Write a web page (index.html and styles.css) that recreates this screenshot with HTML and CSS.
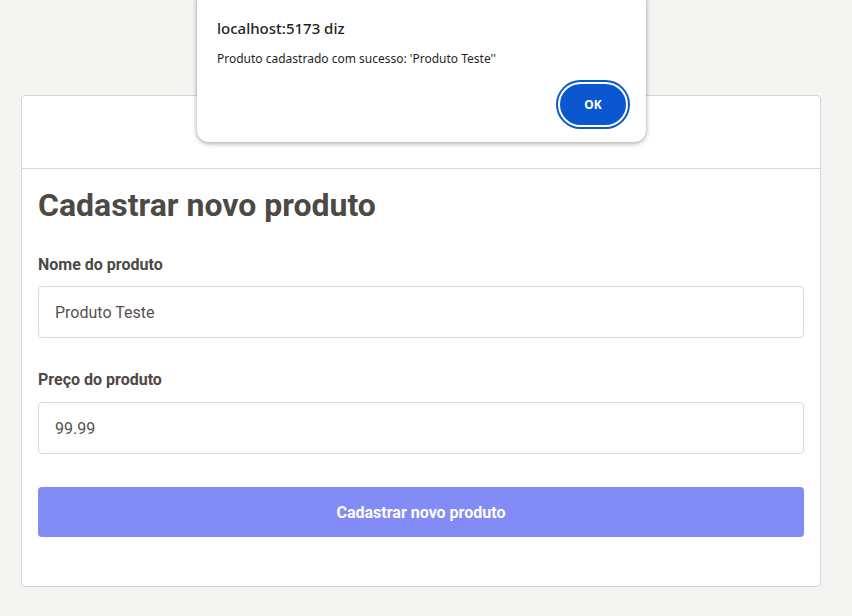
FILE: index.html
```html
<!DOCTYPE html>
<html lang="pt-BR">
<head>
<meta charset="utf-8">
<title>Cadastrar novo produto</title>
<link rel="stylesheet" href="styles.css">
</head>
<body>
<div class="page">
  <div class="card">
    <div class="card-header"></div>
    <form class="card-body">
      <h1 class="title">Cadastrar novo produto</h1>
      <label class="label" for="nome">Nome do produto</label>
      <input class="input" id="nome" type="text" value="Produto Teste">
      <label class="label label-gap" for="preco">Preço do produto</label>
      <input class="input" id="preco" type="text" value="99.99">
      <button class="submit" type="button">Cadastrar novo produto</button>
    </form>
  </div>
</div>
<div class="dialog">
  <div class="dialog-title">localhost:5173 diz</div>
  <div class="dialog-msg">Produto cadastrado com sucesso: 'Produto Teste''</div>
  <div class="dialog-actions">
    <button class="ok" type="button">OK</button>
  </div>
</div>
</body>
</html>
```
FILE: styles.css
```css
html, body {
  margin: 0;
  padding: 0;
  background: #f4f4f2;
  font-family: Roboto, "Liberation Sans", sans-serif;
}
.page {
  padding: 95px 0 0 21px;
}
.card {
  width: 798px;
  height: 490px;
  background: #fff;
  border: 1px solid #d6d6d4;
  border-radius: 4px;
}
.card-header {
  height: 72px;
  border-bottom: 1px solid #d6d6d4;
}
.card-body {
  padding: 16px 16px 0 16px;
  display: flex;
  flex-direction: column;
}
.title {
  margin: 0;
  font-size: 32px;
  line-height: 40px;
  font-weight: 700;
  color: #4d4945;
}
.label {
  margin-top: 30px;
  margin-bottom: 11px;
  font-size: 16px;
  line-height: 20px;
  font-weight: 700;
  color: #4d4945;
}
.label-gap {
  margin-top: 32px;
  margin-bottom: 12px;
}
.input {
  box-sizing: border-box;
  height: 52px;
  width: 100%;
  border: 1px solid #d9d9d9;
  border-radius: 4px;
  padding: 0 16px;
  font-family: Roboto, "Liberation Sans", sans-serif;
  font-size: 16px;
  color: #55514d;
  background: #fff;
  outline: none;
}
.submit {
  margin-top: 33px;
  height: 50px;
  width: 100%;
  border: none;
  border-radius: 4px;
  background: #838bf7;
  color: #fff;
  font-family: Roboto, "Liberation Sans", sans-serif;
  font-size: 16px;
  font-weight: 700;
}
.dialog {
  position: absolute;
  left: 197px;
  top: -10px;
  width: 449px;
  height: 152px;
  box-sizing: border-box;
  background: #fff;
  border-radius: 12px;
  box-shadow: 0 1px 4px rgba(0,0,0,0.28), 0 2px 6px rgba(0,0,0,0.12);
  padding: 28px 18px 0 20px;
  font-family: "Noto Sans", "Open Sans", sans-serif;
  color: #1f1f1f;
}
.dialog-title {
  font-size: 15px;
  line-height: 20px;
  font-weight: 500;
}
.dialog-msg {
  margin-top: 12px;
  font-size: 12px;
  line-height: 18px;
}
.dialog-actions {
  display: flex;
  justify-content: flex-end;
  margin-top: 14px;
}
.ok {
  box-sizing: border-box;
  width: 70px;
  height: 45px;
  border-radius: 23px;
  background: #0b57d0;
  border: 2px solid #fff;
  box-shadow: 0 0 0 2px #0b57d0;
  color: #fff;
  font-family: "Noto Sans", "Open Sans", sans-serif;
  font-size: 12px;
  font-weight: 700;
  margin-right: 0;
}
```
